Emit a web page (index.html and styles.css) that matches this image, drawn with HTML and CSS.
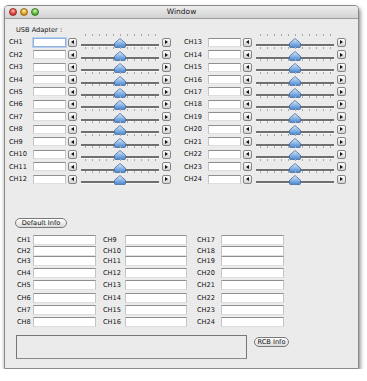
FILE: index.html
```html
<!DOCTYPE html>
<html lang="en">
<head>
    <meta charset="UTF-8">
    <title>Window</title>
    <link rel="stylesheet" href="styles.css">
</head>
<body>
    <div class="window">
        <div class="titlebar">
            <div class="lights">
                <span class="light close"></span>
                <span class="light minimize"></span>
                <span class="light zoom"></span>
            </div>
            <div class="title">Window</div>
        </div>

        <div class="content">
            <div class="usb-label">USB Adapter :</div>

            <div class="sliders">
                <div class="slider-col" id="sliderColA"></div>
                <div class="slider-col" id="sliderColB"></div>
            </div>

            <button class="pill default-btn">Default Info</button>

            <div class="info-grid">
                <div class="info-col col-a" id="infoColA"></div>
                <div class="info-col col-b" id="infoColB"></div>
                <div class="info-col col-c" id="infoColC"></div>
            </div>

            <div class="bottom">
                <div class="log"></div>
                <button class="pill rcb-btn">RCB Info</button>
            </div>
        </div>
    </div>

    <script>
        // slider graphic: tick marks, track and the blue knob
        function sliderSvg() {
            let ticks = '';
            for (let i = 0; i < 11; i++) {
                const x = 4.5 + i * 7;
                ticks += `<line x1="${x}" y1="0" x2="${x}" y2="2" />`;
            }
            return `
                <svg class="slider" width="78" height="14" viewBox="0 0 78 14">
                    <defs>
                        <linearGradient id="knob" x1="0" y1="0" x2="0" y2="1">
                            <stop offset="0" stop-color="#e4effb"/>
                            <stop offset="0.5" stop-color="#8db7e6"/>
                            <stop offset="1" stop-color="#4585d0"/>
                        </linearGradient>
                    </defs>
                    <g stroke="#a8a8a8" stroke-width="1">${ticks}</g>
                    <rect x="0" y="10" width="78" height="2" fill="#6f6f6f"/>
                    <rect x="0" y="12" width="78" height="1" fill="#f6f6f6"/>
                    <path d="M39 4.5 L44.5 9.2 L44.5 12.2 Q44.5 13.6 43.1 13.6 L34.9 13.6 Q33.5 13.6 33.5 12.2 L33.5 9.2 Z"
                          fill="url(#knob)" stroke="#46689a" stroke-width="0.8"/>
                </svg>`;
        }

        function sliderRow(n) {
            const focus = n === 1 ? ' focused' : '';
            return `
                <div class="slider-row">
                    <span class="ch-label">CH${n}</span>
                    <span class="field${focus}"></span>
                    <span class="arrow left"><i></i></span>
                    ${sliderSvg()}
                    <span class="arrow right"><i></i></span>
                </div>`;
        }

        function infoRows(from) {
            let html = '';
            for (let n = from; n < from + 8; n++) {
                html += `<span class="ch-label">CH${n}</span><span class="field"></span>`;
            }
            return html;
        }

        let a = '', b = '';
        for (let i = 1; i <= 12; i++) {
            a += sliderRow(i);
            b += sliderRow(i + 12);
        }
        document.getElementById('sliderColA').innerHTML = a;
        document.getElementById('sliderColB').innerHTML = b;

        document.getElementById('infoColA').innerHTML = infoRows(1);
        document.getElementById('infoColB').innerHTML = infoRows(9);
        document.getElementById('infoColC').innerHTML = infoRows(17);
    </script>
</body>
</html>
```

FILE: styles.css
```css
body {
    margin: 0;
    background-color: #fff;
    font-family: "DejaVu Sans", "Liberation Sans", sans-serif;
    color: #222;
}
.window {
    width: 353px;
    height: 362px;
    margin: 5px 0 0 4px;
    border: 1px solid #8a8a8a;
    border-radius: 4px 4px 0 0;
    background: repeating-linear-gradient(#ededed 0, #ededed 1px, #e9e9e9 1px, #e9e9e9 2px);
    box-shadow: 1px 3px 4px rgba(0,0,0,0.55);
    overflow: hidden;
}
.titlebar {
    height: 12px;
    border-bottom: 1px solid #9c9c9c;
    background: linear-gradient(#ededed, #d2d2d2);
    display: grid;
    grid-template-columns: 1fr auto 1fr;
    align-items: center;
}
.lights {
    display: flex;
    gap: 3px;
    padding-left: 4px;
}
.light {
    width: 8px;
    height: 8px;
    border-radius: 50%;
    box-sizing: border-box;
}
.close {
    background: radial-gradient(circle at 50% 30%, #ffc1bc 0, #e2473f 55%, #a8201a 100%);
    border: 0.5px solid #9a2b25;
}
.minimize {
    background: radial-gradient(circle at 50% 30%, #ffe9b0 0, #e2a52a 55%, #a86c0c 100%);
    border: 0.5px solid #9a6a14;
}
.zoom {
    background: radial-gradient(circle at 50% 30%, #d4f5c0 0, #63bb40 55%, #2e7a1a 100%);
    border: 0.5px solid #3b7a25;
}
.title {
    font-size: 7.5px;
    color: #222;
    line-height: 12px;
}
.content {
    padding-left: 4px;
}
.usb-label {
    font-size: 6.6px;
    line-height: 8px;
    margin: 7px 0 0 7px;
    color: #111;
}
.sliders {
    display: flex;
    gap: 13px;
    margin-top: 2px;
}
.slider-row {
    display: flex;
    align-items: center;
    height: 12.45px;
}
.ch-label {
    font-size: 6.6px;
    line-height: 8px;
    color: #111;
}
.slider-row .ch-label {
    width: 24px;
}
.field {
    display: block;
    box-sizing: border-box;
    height: 9px;
    background-color: #fff;
    border: 1px solid #c4c4c4;
    border-top-color: #8e8e8e;
    border-bottom-color: #dedede;
}
.slider-row .field {
    width: 33px;
    margin-right: 2px;
}
.field.focused {
    border-color: #8fb1dc;
    box-shadow: 0 0 0 1px #b7cff0;
}
.arrow {
    box-sizing: border-box;
    width: 9px;
    height: 9px;
    border: 1px solid #858585;
    border-radius: 2px;
    background: linear-gradient(#ffffff, #d2d2d2);
    display: flex;
    align-items: center;
    justify-content: center;
}
.arrow i {
    width: 0;
    height: 0;
    border-top: 2.5px solid transparent;
    border-bottom: 2.5px solid transparent;
}
.arrow.left i {
    border-right: 3px solid #111;
}
.arrow.right i {
    border-left: 3px solid #111;
}
.slider {
    display: block;
    margin: 0 3px 2px 4px;
}
.pill {
    display: block;
    box-sizing: border-box;
    padding: 0;
    font-family: "DejaVu Sans", "Liberation Sans", sans-serif;
    font-size: 6.6px;
    color: #111;
    height: 10px;
    line-height: 8px;
    border: 1px solid #7a7a7a;
    border-radius: 5px;
    background: linear-gradient(#ffffff, #dadada);
}
.default-btn {
    width: 52px;
    margin: 33px 0 0 6px;
}
.info-grid {
    display: flex;
    margin: 6px 0 0 8px;
}
.info-col {
    display: grid;
    grid-template-rows: 11px 11px 10px 13px 12px 13px 12px 12px;
    align-items: center;
}
.info-col .field {
    height: 10px;
}
.col-a {
    grid-template-columns: 16px 63px;
}
.col-b {
    grid-template-columns: 22px 62px;
    margin-left: 7px;
}
.col-c {
    grid-template-columns: 24px 63px;
    margin-left: 10px;
}
.bottom {
    display: flex;
    align-items: flex-start;
    margin: 7px 0 0 7px;
}
.log {
    box-sizing: border-box;
    width: 231px;
    height: 24px;
    border: 1px solid #767676;
    border-bottom-color: #8a8a8a;
    background-color: #ebebeb;
}
.rcb-btn {
    width: 35px;
    margin: 2px 0 0 7px;
}
```
